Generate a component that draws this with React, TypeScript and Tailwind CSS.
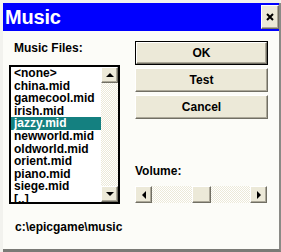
import React from "react";

const files = [
  "<none>",
  "china.mid",
  "gamecool.mid",
  "irish.mid",
  "jazzy.mid",
  "newworld.mid",
  "oldworld.mid",
  "orient.mid",
  "piano.mid",
  "siege.mid",
  "[..]",
];

const font = { fontFamily: '"Liberation Sans Narrow", "Liberation Sans", Arial, sans-serif' };

function Arrow({ dir }: { dir: "up" | "down" | "left" | "right" }) {
  const pts = {
    up: "0,4 4,0 8,4",
    down: "0,0 8,0 4,4",
    left: "4,0 4,8 0,4",
    right: "0,0 0,8 4,4",
  }[dir];
  const vertical = dir === "up" || dir === "down";
  return (
    <svg width={vertical ? 8 : 4} height={vertical ? 4 : 8} viewBox={vertical ? "0 0 8 4" : "0 0 4 8"}>
      <polygon points={pts} fill="#000" />
    </svg>
  );
}

function Bevel({ className, children }: { className?: string; children?: React.ReactNode }) {
  return (
    <div
      className={
        "flex items-center justify-center bg-[#ece9d8] border border-t-white border-l-white border-r-[#716f64] border-b-[#716f64] shadow-[inset_-1px_-1px_0_#aca899] " +
        (className ?? "")
      }
    >
      {children}
    </div>
  );
}

function Button({ label, primary }: { label: string; primary?: boolean }) {
  return (
    <div className={"h-[24px] w-[133px] " + (primary ? "border border-black" : "")}>
      <Bevel className="h-full w-full text-[12px] font-bold text-black">{label}</Bevel>
    </div>
  );
}

export default function App() {
  return (
    <div className="w-[281px] h-[252px] bg-[#f2f2ee] pl-[3px] pt-[3px] overflow-hidden" style={font}>
      <div className="w-[276px] h-[246px] flex flex-col border-r-2 border-b-[3px] border-r-[#8a8a86] border-b-[#7a7a76] box-content">
        {/* title bar */}
        <div className="h-[28px] bg-[#0000ff] flex items-center justify-between pl-[2px] pr-[0px]">
          <span className="text-white font-bold text-[20px] leading-none tracking-[-0.2px]">Music</span>
          <Bevel className="w-[18px] h-[24px]">
            <svg width="8" height="8" viewBox="0 0 8 8">
              <path d="M1 1 L7 7 M7 1 L1 7" stroke="#000" strokeWidth="2" />
            </svg>
          </Bevel>
        </div>

        {/* body */}
        <div className="flex-1 bg-[#fcfcf8] flex text-black">
          <div className="w-[124px] pl-[6px] pt-[9px] flex flex-col">
            <div className="pl-[5px] text-[12px] font-bold leading-[16px]">Music Files:</div>
            <div className="mt-[9px] w-[111px] h-[139px] border-2 border-black flex bg-white">
              <div className="flex-1 overflow-hidden">
                {files.map((f) => (
                  <div
                    key={f}
                    className={
                      "h-[12.6px] leading-[12.6px] pl-[3px] text-[12px] font-bold whitespace-nowrap " +
                      (f === "jazzy.mid" ? "bg-[#148080] text-white" : "")
                    }
                  >
                    {f}
                  </div>
                ))}
              </div>
              <div className="w-[17px] flex flex-col bg-[repeating-conic-gradient(#ece9d8_0%_25%,#ffffff_0%_50%)] bg-size-[2px_2px]">
                <Bevel className="h-[16px]">
                  <Arrow dir="up" />
                </Bevel>
                <div className="flex-1" />
                <Bevel className="h-[16px]">
                  <Arrow dir="down" />
                </Bevel>
              </div>
            </div>
            <div className="pl-[6px] mt-[15px] text-[12px] font-bold leading-[16px]">c:\epicgame\music</div>
          </div>

          <div className="pl-[8px] pt-[10px] flex flex-col">
            <div className="flex flex-col gap-[3px]">
              <Button label="OK" primary />
              <Button label="Test" />
              <Button label="Cancel" />
            </div>
            <div className="mt-[44px] text-[12px] font-bold leading-[16px]">Volume:</div>
            <div className="mt-[7px] w-[132px] h-[17px] flex bg-[repeating-conic-gradient(#ece9d8_0%_25%,#ffffff_0%_50%)] bg-size-[2px_2px]">
              <Bevel className="w-[17px] h-full">
                <Arrow dir="left" />
              </Bevel>
              <div className="w-[40px]" />
              <Bevel className="w-[19px] h-full" />
              <div className="flex-1" />
              <Bevel className="w-[17px] h-full">
                <Arrow dir="right" />
              </Bevel>
            </div>
          </div>
        </div>
      </div>
    </div>
  );
}
